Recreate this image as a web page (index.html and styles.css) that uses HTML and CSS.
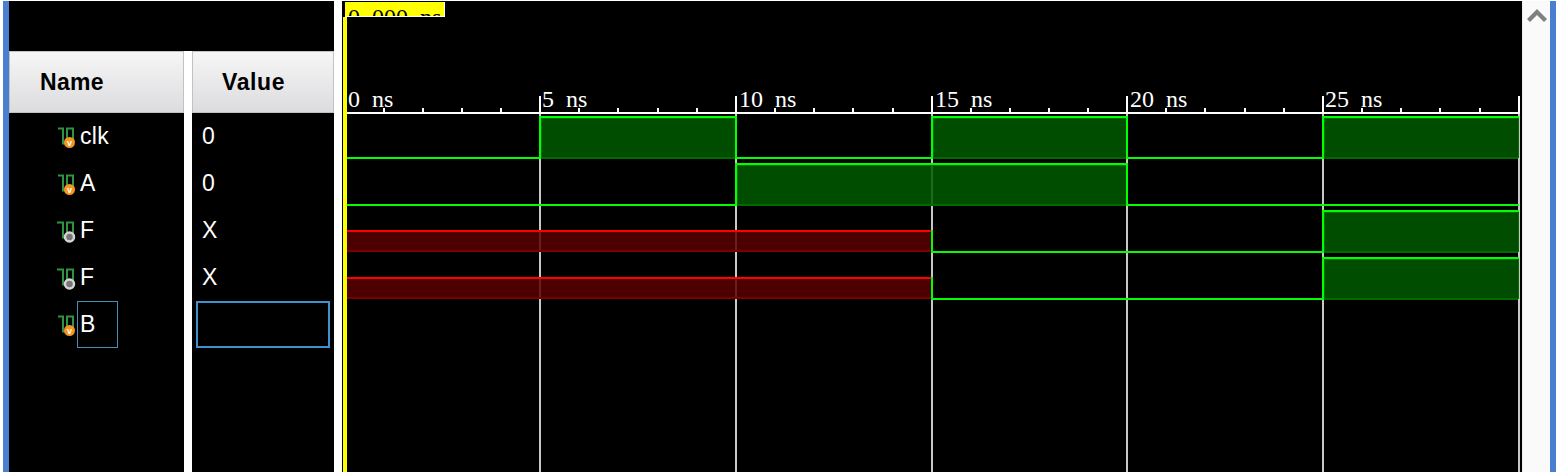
FILE: index.html
```html
<!DOCTYPE html>
<html lang="en">
  <head>
    <meta charset="UTF-8" />
    <title>Waveform viewer</title>
    <link rel="stylesheet" href="styles.css">
  </head>
  <body>
    <div class="edge"></div>

    <div class="objects">
      <div class="band"></div>
      <div class="columns">
        <div class="panel name-panel">
          <div class="head name-head">Name</div>
          <div class="row">
            <svg class="icon" viewBox="0 0 20 22"><path class="pulse" d="M1 1.5h5v15h4V1.5h6v15" /><circle class="dot-in" cx="12.5" cy="15.5" r="5.5" /><text class="dot-v" x="12.5" y="18.5">v</text></svg>
            <span class="label">clk</span>
          </div>
          <div class="row">
            <svg class="icon" viewBox="0 0 20 22"><path class="pulse" d="M1 1.5h5v15h4V1.5h6v15" /><circle class="dot-in" cx="12.5" cy="15.5" r="5.5" /><text class="dot-v" x="12.5" y="18.5">v</text></svg>
            <span class="label">A</span>
          </div>
          <div class="row">
            <svg class="icon" viewBox="0 0 20 22"><path class="pulse" d="M0 1.5h6v15h4V1.5h6v15" /><circle class="dot-out" cx="12.5" cy="16" r="4.5" /><circle class="dot-core" cx="12.5" cy="16" r="2.5" /></svg>
            <span class="label">F</span>
          </div>
          <div class="row">
            <svg class="icon" viewBox="0 0 20 22"><path class="pulse" d="M0 1.5h6v15h4V1.5h6v15" /><circle class="dot-out" cx="12.5" cy="16" r="4.5" /><circle class="dot-core" cx="12.5" cy="16" r="2.5" /></svg>
            <span class="label">F</span>
          </div>
          <div class="row">
            <svg class="icon" viewBox="0 0 20 22"><path class="pulse" d="M1 1.5h5v15h4V1.5h6v15" /><circle class="dot-in" cx="12.5" cy="15.5" r="5.5" /><text class="dot-v" x="12.5" y="18.5">v</text></svg>
            <span class="label label-edit">B</span>
          </div>
        </div>

        <div class="panel value-panel">
          <div class="head value-head">Value</div>
          <div class="row value">0</div>
          <div class="row value">0</div>
          <div class="row value">X</div>
          <div class="row value">X</div>
          <div class="row value-edit-row"><div class="value-edit"></div></div>
        </div>
      </div>
    </div>

    <div class="wave">
      <!-- viewBox uses window coordinates, so x/y below read straight off the screen -->
      <svg class="wave-svg" viewBox="342 1 1180 471">
        <defs>
          <clipPath id="flagClip"><rect x="345" y="2" width="99" height="14" /></clipPath>
        </defs>

        <!-- time grid -->
        <path class="grid" d="M540 114V472M736 114V472M932 114V472M1127 114V472M1323 114V472M1519 114V472" />

        <!-- clk -->
        <rect class="hi" x="541" y="118" width="194" height="39" />
        <rect class="hi" x="933" y="118" width="193" height="39" />
        <rect class="hi" x="1324" y="118" width="194" height="39" />
        <path class="hi-base" d="M541 158H735M933 158H1126M1324 158H1518" />
        <path class="sig" d="M347 158H540V117H736V158H932V117H1127V158H1323V117H1519" />

        <!-- A -->
        <rect class="hi" x="737" y="165" width="389" height="39" />
        <path class="hi-base" d="M737 205H1126" />
        <path class="sig" d="M347 205H736V164H1127V205H1519" />

        <!-- F -->
        <rect class="un" x="347" y="232" width="584" height="18" />
        <path class="un-base" d="M347 251H931" />
        <path class="un-top" d="M347 231H932" />
        <rect class="hi" x="1324" y="212" width="194" height="39" />
        <path class="hi-base" d="M1324 252H1518" />
        <path class="sig" d="M932 230V252H1323V211H1519" />

        <!-- F -->
        <rect class="un" x="347" y="279" width="584" height="18" />
        <path class="un-base" d="M347 298H931" />
        <path class="un-top" d="M347 278H932" />
        <rect class="hi" x="1324" y="259" width="194" height="39" />
        <path class="hi-base" d="M1324 299H1518" />
        <path class="sig" d="M932 277V299H1323V258H1519" />

        <!-- ruler -->
        <path class="rule" d="M347 113H1520" />
        <path class="major" d="M540 96V112M736 96V112M932 96V112M1127 96V112M1323 96V112M1519 96V112" />
        <path class="minor" d="M384 108v4M423 108v4M462 108v4M501 108v4M579 108v4M618 108v4M658 108v4M697 108v4M775 108v4M814 108v4M853 108v4M893 108v4M971 108v4M1010 108v4M1049 108v4M1088 108v4M1166 108v4M1205 108v4M1245 108v4M1284 108v4M1362 108v4M1401 108v4M1440 108v4M1480 108v4" />
        <!-- labels keep the 12px cell of the fixed-pitch original -->
        <text class="tick" x="348 360 372 384" y="107">0 ns</text>
        <text class="tick" x="542 554 566 578" y="107">5 ns</text>
        <text class="tick" x="739 751 763 775 787" y="107">10 ns</text>
        <text class="tick" x="935 947 959 971 983" y="107">15 ns</text>
        <text class="tick" x="1130 1142 1154 1166 1178" y="107">20 ns</text>
        <text class="tick" x="1325 1337 1349 1361 1373" y="107">25 ns</text>

        <!-- cursor -->
        <rect class="cursor" x="343" y="17" width="4" height="455" />
        <rect class="flag-edge" x="345" y="2" width="100" height="15" />
        <rect class="cursor" x="345" y="2" width="99" height="14" />
        <g clip-path="url(#flagClip)">
          <text class="flag-text" x="348 360 372 384 396 408 420 432" y="25">0.000 ns</text>
        </g>
      </svg>
    </div>

    <div class="scrollbar">
      <svg class="chevron" viewBox="0 0 22 14"><path d="M11 0L21 10L18 13L11 6L4 13L1 10Z" /></svg>
    </div>
    <div class="edge"></div>
  </body>
</html>
```

FILE: styles.css
```css
html,
body {
  margin: 0;
  height: 100%;
}
body {
  display: flex;
  box-sizing: border-box;
  height: 472px;
  padding: 1px 5px 0 3px;
  background: white;
  font-family: "Liberation Sans", Arial, sans-serif;
  overflow: hidden;
}
.edge {
  width: 6px;
  flex: none;
  background: #4a7fd0;
}

.objects {
  width: 325px;
  flex: none;
  margin-right: 8px;
}
.band {
  height: 50px;
  background: black;
}
.columns {
  display: flex;
  justify-content: space-between;
}
.panel {
  flex: none;
  height: 421px;
  background: black;
  color: white;
  font-size: 23px;
}
.name-panel {
  width: 175px;
}
.value-panel {
  width: 142px;
}
.head {
  box-sizing: border-box;
  height: 62px;
  line-height: 60px;
  border: 1px solid #c2c2c2;
  background: linear-gradient(#f6f6f6, #dcdcdf);
  color: black;
  font-weight: bold;
  letter-spacing: 0.3px;
}
.name-head {
  padding-left: 30px;
}
.value-head {
  padding-left: 29px;
  letter-spacing: 0.6px;
}
.row {
  display: flex;
  align-items: center;
  box-sizing: border-box;
  height: 47px;
  padding-left: 48px;
}
.row.value {
  padding-left: 10px;
}
.row.value-edit-row {
  padding: 0 4px;
}
.value-edit {
  box-sizing: border-box;
  width: 100%;
  height: 47px;
  border: 2px solid #3e93cf;
}

.icon {
  width: 20px;
  height: 22px;
  flex: none;
  margin-top: 2px;
  overflow: visible;
}
.pulse {
  fill: none;
  stroke: #2f9440;
  stroke-width: 2;
}
.dot-in {
  fill: #f7941e;
}
.dot-v {
  fill: white;
  font-size: 9px;
  font-weight: bold;
  text-anchor: middle;
}
.dot-out {
  fill: #777;
  stroke: #d4d4d4;
  stroke-width: 2.5;
}
.dot-core {
  fill: #777;
}
.label {
  box-sizing: border-box;
  width: 41px;
  height: 47px;
  line-height: 45px;
  padding-left: 2px;
  border: 1px solid transparent;
  letter-spacing: 0.3px;
}
.label-edit {
  border-color: #4b8cb9;
}

.wave {
  width: 1180px;
  flex: none;
  background: black;
}
.wave-svg {
  display: block;
  width: 1180px;
  height: 471px;
}
.wave-svg path,
.wave-svg rect {
  shape-rendering: crispEdges;
}
.wave-svg path {
  fill: none;
  stroke-width: 2;
}
.grid {
  stroke: #c8c8c8;
}
.sig {
  stroke: #00ff00;
}
.hi {
  fill: #005a00;
  fill-opacity: 0.85;
  stroke: #007000;
  stroke-width: 1;
}
.hi-base {
  stroke: #006a00;
}
.un {
  fill: #5a0000;
  fill-opacity: 0.85;
}
.un-base {
  stroke: #7a0000;
}
.un-top {
  stroke: #ff0000;
}
.rule,
.major,
.minor {
  stroke: white;
}
.tick {
  fill: white;
  font-family: "Liberation Serif", "Times New Roman", serif;
  font-size: 24px;
}
.cursor {
  fill: #ffff00;
}
.flag-edge {
  fill: white;
}
.flag-text {
  fill: black;
  font-family: "Liberation Serif", "Times New Roman", serif;
  font-size: 24px;
}

.scrollbar {
  flex: 1;
  display: flex;
  justify-content: center;
  align-items: flex-start;
  padding-top: 8px;
  background: #fafafa;
  border-left: 1px solid #eeeeee;
}
.chevron {
  width: 22px;
  height: 14px;
  fill: #808080;
}
```
